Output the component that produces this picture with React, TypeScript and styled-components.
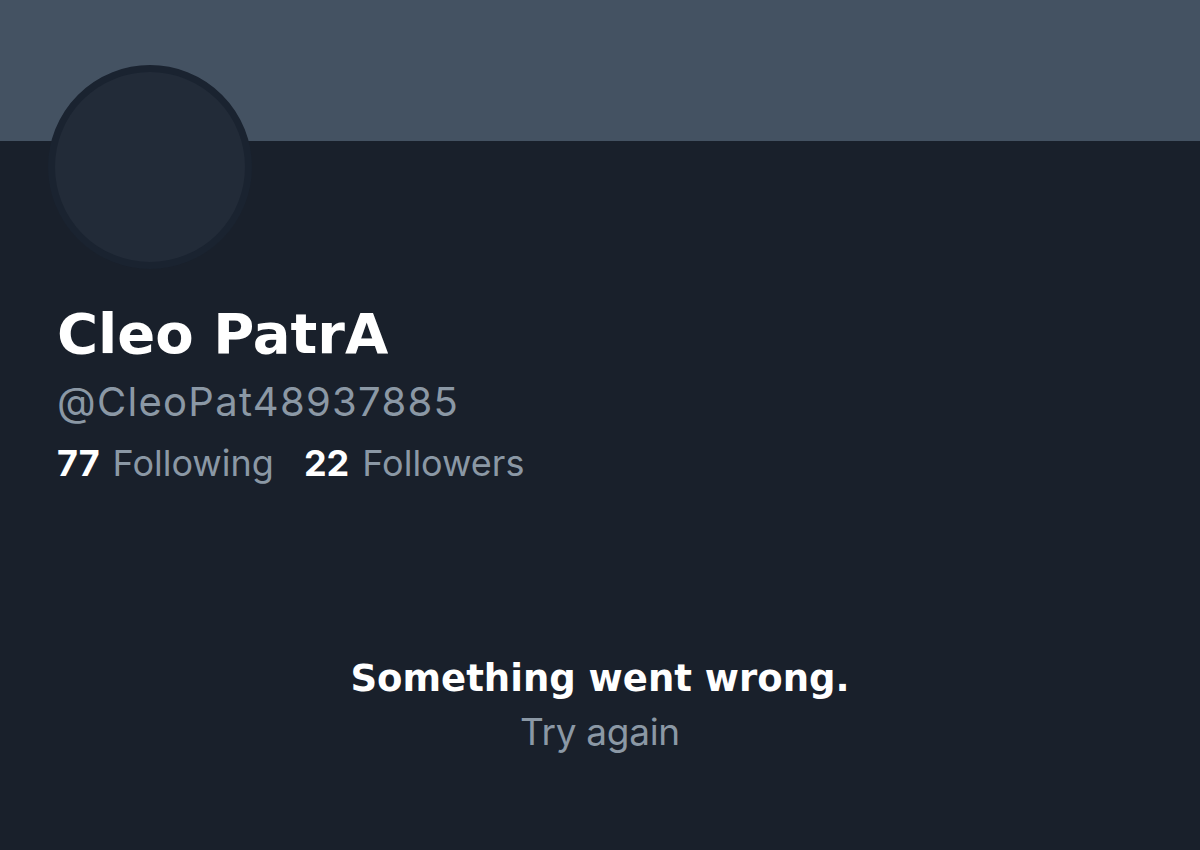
import React from "react";
import styled, { createGlobalStyle } from "styled-components";

const Global = createGlobalStyle`
  html, body { margin: 0; padding: 0; background: #19202b; }
  body { font-family: Inter, "Noto Sans", sans-serif; }
`;

const Page = styled.div`
  width: 1200px;
  height: 850px;
  background: #19202b;
  display: flex;
  flex-direction: column;
  overflow: hidden;
`;

const Banner = styled.div`
  height: 141px;
  background: #445262;
  flex-shrink: 0;
`;

const Header = styled.div`
  position: relative;
  padding: 0 0 0 57px;
  display: flex;
  flex-direction: column;
`;

const Avatar = styled.div`
  position: absolute;
  left: 48px;
  top: -76px;
  width: 190px;
  height: 190px;
  border-radius: 50%;
  border: 7px solid #1a2330;
  background: #222b38;
`;

const Name = styled.h1`
  margin: 161px 0 0;
  font-family: "DejaVu Sans", Inter, sans-serif;
  font-size: 56px;
  font-weight: 700;
  color: #ffffff;
  line-height: 64px;
`;

const Handle = styled.div`
  margin-top: 12px;
  font-size: 40px;
  letter-spacing: 1.3px;
  color: #8b98a5;
  line-height: 48px;
`;

const Stats = styled.div`
  margin-top: 15px;
  display: flex;
  gap: 30px;
  font-size: 36px;
  line-height: 44px;
`;

const Stat = styled.span`
  color: #8b98a5;
`;

const Num = styled.b`
  color: #ffffff;
  font-weight: 700;
  margin-right: 13px;
`;

const ErrorBox = styled.div`
  margin-top: 171px;
  display: flex;
  flex-direction: column;
  align-items: center;
`;

const ErrTitle = styled.div`
  font-family: "DejaVu Sans", Inter, sans-serif;
  font-size: 37px;
  font-weight: 700;
  color: #ffffff;
  line-height: 46px;
`;

const Retry = styled.div`
  margin-top: 8px;
  font-size: 37px;
  letter-spacing: -0.3px;
  color: #8b98a5;
  line-height: 44px;
`;

export default function App() {
  return (
    <Page>
      <Global />
      <Banner />
      <Header>
        <Avatar />
        <Name>Cleo PatrA</Name>
        <Handle>@CleoPat48937885</Handle>
        <Stats>
          <Stat><Num>77</Num>Following</Stat>
          <Stat><Num>22</Num>Followers</Stat>
        </Stats>
      </Header>
      <ErrorBox>
        <ErrTitle>Something went wrong.</ErrTitle>
        <Retry>Try again</Retry>
      </ErrorBox>
    </Page>
  );
}
